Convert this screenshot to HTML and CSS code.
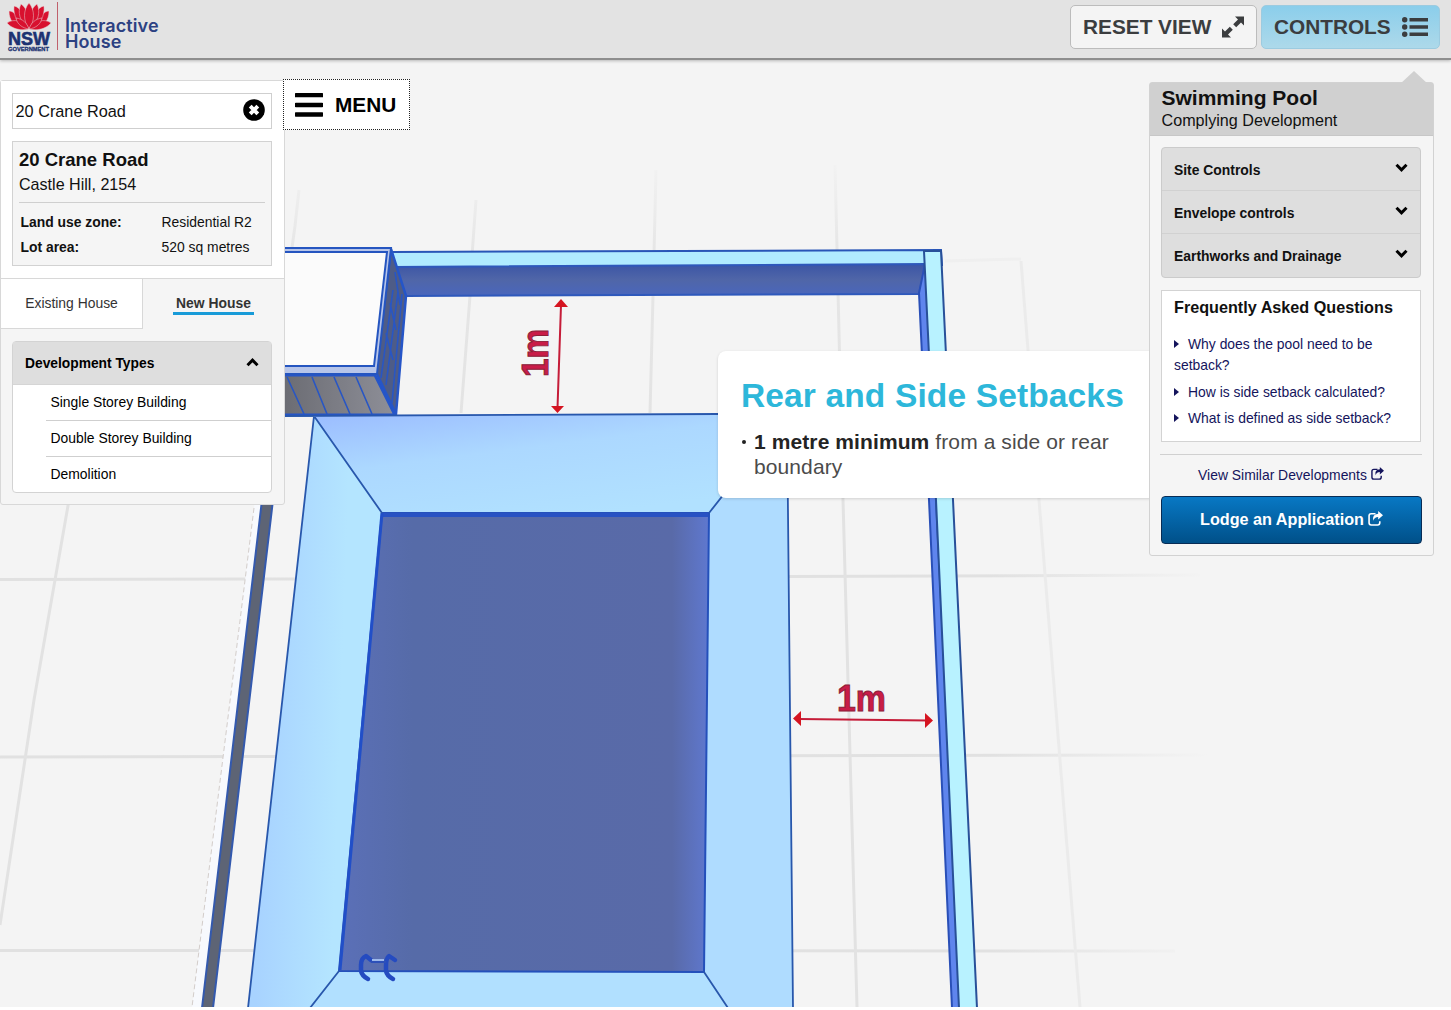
FILE: index.html
```html
<!DOCTYPE html>
<html lang="en">
<head>
<meta charset="utf-8">
<title>Interactive House</title>
<link rel="stylesheet" href="styles.css">
</head>
<body>
<header class="topbar">
  <div class="brand">
    <svg class="waratah" width="48" height="50" viewBox="0 0 48 50">
      <g fill="#d8112f" stroke="#e7d3d5" stroke-width=".5">
        <path d="M4 9C9 9 14 15 18 26C9 25 4 18 4 9Z"/><path d="M44 9C39 9 34 15 30 26C39 25 44 18 44 9Z"/>
        <path d="M9 4C15 5 21 14 22 26C13 23 8 14 9 4Z"/><path d="M39 4C33 5 27 14 26 26C35 23 40 14 39 4Z"/>
        <path d="M16 2C22 6 25 16 23 26C15 20 12 10 16 2Z"/><path d="M32 2C26 6 23 16 25 26C33 20 36 10 32 2Z"/>
        <path d="M24 1C30 8 30 19 24 27C18 19 18 8 24 1Z"/>
        <path d="M2 21C9 16 18 19 24 27C16 29 7 27 2 21Z"/><path d="M46 21C39 16 30 19 24 27C32 29 41 27 46 21Z"/>
        <path d="M11 16C18 17 22 21 24 27C17 26 12 22 11 16Z"/><path d="M37 16C30 17 26 21 24 27C31 26 36 22 37 16Z"/>
      </g>
      <text class="nsw" x="3" y="42.500" textLength="42" lengthAdjust="spacingAndGlyphs">NSW</text>
      <text class="gov" x="3" y="49" textLength="41" lengthAdjust="spacingAndGlyphs">GOVERNMENT</text>
    </svg>
    <div class="brand-name">Interactive<br>House</div>
  </div>
  <div class="actions">
    <button class="btn">RESET VIEW
      <svg width="24" height="24" viewBox="0 0 24 24"><path fill="#3b3d3f" d="M14 1.500h9v9l-3-3-4.800 4.800-3-3L17 4.500zM10 22.500H1v-9l3 3 4.800-4.800 3 3L7 19.500z"/></svg>
    </button>
    <button class="btn btn-on">CONTROLS
      <svg width="26" height="20" viewBox="0 0 26 20" fill="#3b3d3f"><circle cx="2.700" cy="2.700" r="2.700"/><circle cx="2.700" cy="10" r="2.700"/><circle cx="2.700" cy="17.300" r="2.700"/><path d="M7.500 1H26v3.500H7.500zM7.500 8.300H26v3.500H7.500zM7.500 15.500H26V19H7.500z"/></svg>
    </button>
  </div>
</header>
<main class="stage">
  <svg class="scene" viewBox="0 60 1451 947" width="1451" height="947">
    <defs>
      <linearGradient id="deckTop" x1="0" y1="0" x2=".6" y2="1"><stop offset="0" stop-color="#9bbcff"/><stop offset=".45" stop-color="#acd8ff"/><stop offset="1" stop-color="#b1e1ff"/></linearGradient>
      <linearGradient id="deckLeft" x1="0" x2="1" y1="0" y2=".15"><stop offset=".2" stop-color="#a8d3ff"/><stop offset=".75" stop-color="#b4e5ff"/></linearGradient>
      <linearGradient id="water" x1="0" x2="1"><stop offset="0" stop-color="#5b70b8"/><stop offset=".2" stop-color="#566ba8"/><stop offset=".9" stop-color="#596aa8"/><stop offset="1" stop-color="#5f78cf"/></linearGradient>
      <linearGradient id="wall" x1="0" x2="0" y1="0" y2="1"><stop offset="0" stop-color="#3b55a5"/><stop offset=".5" stop-color="#5066a8"/><stop offset="1" stop-color="#4966bd"/></linearGradient>
      <linearGradient id="gridFade" gradientUnits="userSpaceOnUse" x1="0" x2="1210" y1="0" y2="0"><stop offset=".82" stop-color="#e1e1e1"/><stop offset="1" stop-color="#f4f4f4"/></linearGradient>
      <linearGradient id="gridRise" gradientUnits="userSpaceOnUse" x1="0" x2="0" y1="165" y2="500"><stop offset="0" stop-color="#f2f2f2"/><stop offset=".25" stop-color="#e6e6e6"/><stop offset="1" stop-color="#e2e2e2"/></linearGradient>
      <linearGradient id="shade" x1="0" x2="1"><stop offset="0" stop-color="#6a6b72"/><stop offset="1" stop-color="#8e8f98"/></linearGradient>
    </defs>
    <g fill="none" stroke-width="3">
      <path stroke="url(#gridFade)" d="M0 579.500L290 579L790 576.500L1200 575M0 757L1210 755M0 950.500L1175 951"/>
      <path stroke="url(#gridRise)" d="M299 190L295 226L290 262M476 200L472 256M470 296L461 413M656 170L654 254M653 296L650 413M835 165L837 249L843 500L857 1007M69 500L34 700L0 925"/>
      <path stroke="#efefef" d="M945 261L1021 259"/>
      <path stroke="#ebebeb" d="M1021 261L1028 350L1039 500L1060 760L1080 1007"/>
    </g>
    <path fill="#f7f9fd" d="M255 500L265 500L202 1007L192 1007Z"/>
    <path fill="none" stroke="#d3cdca" stroke-dasharray="5 3" d="M255 500L192 1007"/>
    <path fill="#5d6475" stroke="#3359ae" stroke-width="2" d="M262 500L273 500L213 1008L202 1008Z"/>
    <path fill="#fbfbfb" d="M280 252H388L376 367H280Z"/>
    <path fill="#b0ebff" stroke="#2855b7" stroke-width="2" d="M392 252L941 250L942 265L393 268Z"/>
    <path fill="url(#wall)" stroke="#2e58bb" stroke-width="2" d="M393 267L926 264L919 294L406 296Z"/>
    <path fill="#5f85ed" stroke="#294fb7" stroke-width="2" d="M919 293L925 264L928 300L936 500L961 1008H952L929 500Z"/>
    <path fill="#b8f2ff" stroke="#285099" stroke-width="2" d="M924 251H941L953 500L977 1008H959L936 500Z"/>
    <path fill="url(#shade)" stroke="#2555c8" stroke-width="3" d="M280 375H375L395 415H280Z"/>
    <path fill="#4e5c87" stroke="#2555c8" stroke-width="2.500" d="M391 249L406 296L396 414L376 372Z"/>
    <path fill="none" stroke="#2856c4" stroke-width="1.600" d="M287 377L304 414M312 377L327 414M334 377L350 414M356 377L372 414M393 290L381 378M398 292L386 385M402 294L392 403M395 272L400 305M390 303L396 330M386 333L393 360"/>
    <path fill="#b7c5e9" stroke="#2555c0" stroke-width="2" d="M280 366H374L387 252H280V248H391L377 374H280Z"/>
    <path fill="url(#deckTop)" d="M314 416L718 414H788L709 513H382Z"/>
    <path fill="url(#deckLeft)" d="M314 416L382 513L339 971L310 1008H248Z"/>
    <path fill="#afdcff" d="M787 414L709 513L704 971L728 1008H793Z"/>
    <path fill="#b1e0ff" d="M339 971H704L728 1008H310Z"/>
    <path fill="url(#water)" stroke="#2450bb" stroke-width="2" d="M382 513H709L704 972L339 971Z"/>
    <path fill="none" stroke="#2852c3" stroke-width="4" d="M382 515H708"/>
    <path fill="none" stroke="#214fc8" stroke-width="3" d="M382 513L340 970"/>
    <path fill="none" stroke="#2857ac" stroke-width="1.800" d="M280 416L718 414M314 416L382 513M314 416L248 1008M709 513L787 414L793 1008M339 971L310 1008M704 972L728 1008"/>
    <path fill="none" stroke="#254bc0" stroke-width="4.500" stroke-linecap="round" stroke-linejoin="round" d="M371 960L366 956Q361 958 361 965V971Q362 976 368 979M395 960L389 956Q386 958 386 966V971Q387 976 393 979"/>
    <path stroke="#2d50b8" stroke-width="2" d="M371 962H386"/><path stroke="#9db8ea" stroke-width="2" d="M372 960H384"/>
    <g stroke="#c51c38" stroke-width="2" fill="#d51420">
      <path d="M561 305L557.500 408M799 719L928 720.500"/>
      <path stroke="none" d="M561 299L568 307H554ZM557.500 413L564 406H551ZM793 718.500L801 711V726ZM933 720.500L925 713V728Z"/>
    </g>
    <text class="measure" x="837" y="711" textLength="49" lengthAdjust="spacingAndGlyphs">1m</text>
    <text class="measure" transform="translate(548 377) rotate(-90)" textLength="48" lengthAdjust="spacingAndGlyphs">1m</text>
  </svg>

  <section class="callout">
    <h2>Rear and Side Setbacks</h2>
    <ul><li><b>1 metre minimum</b> from a side or rear boundary</li></ul>
  </section>

  <aside class="site">
    <div class="site-top">
      <div class="search"><span>20 Crane Road</span>
        <svg width="22" height="22" viewBox="0 0 22 22"><circle cx="11" cy="11" r="10.800"/><path d="M7.200 7.200l7.600 7.600M14.800 7.200l-7.600 7.600" stroke="#fff" stroke-width="4"/></svg>
      </div>
      <div class="lot">
        <h3>20 Crane Road</h3>
        <p>Castle Hill, 2154</p>
        <dl><dt>Land use zone:</dt><dd>Residential R2</dd><dt>Lot area:</dt><dd>520 sq metres</dd></dl>
      </div>
    </div>
    <nav class="tabs"><a class="tab">Existing House</a><a class="tab tab-on"><span>New House</span></a></nav>
    <div class="types">
      <div class="types-head">Development Types
        <svg width="13" height="9" viewBox="0 0 13 9"><path class="chev" d="M1.500 7.200L6.500 2.200L11.500 7.200"/></svg></div>
      <ul><li>Single Storey Building</li><li>Double Storey Building</li><li>Demolition</li></ul>
    </div>
  </aside>

  <button class="menu">
    <svg width="28" height="24" viewBox="0 0 28 24"><path d="M1 2.200H27M1 12H27M1 21.500H27" stroke="#000" stroke-width="4.300" stroke-linecap="round"/></svg>MENU
  </button>

  <aside class="controls">
    <svg class="pointer" width="28" height="13" viewBox="0 0 28 13"><path fill="#d0d0d0" d="M0 13L14 0L28 13Z"/></svg>
    <div class="controls-head"><h2>Swimming Pool</h2><p>Complying Development</p></div>
    <div class="controls-body">
      <ul class="accordion">
        <li>Site Controls<svg width="13" height="9" viewBox="0 0 13 9"><path class="chev" d="M1.500 1.800L6.500 6.800L11.500 1.800"/></svg></li>
        <li>Envelope controls<svg width="13" height="9" viewBox="0 0 13 9"><path class="chev" d="M1.500 1.800L6.500 6.800L11.500 1.800"/></svg></li>
        <li>Earthworks and Drainage<svg width="13" height="9" viewBox="0 0 13 9"><path class="chev" d="M1.500 1.800L6.500 6.800L11.500 1.800"/></svg></li>
      </ul>
      <div class="faq">
        <h3>Frequently Asked Questions</h3>
        <ul>
          <li><i></i>Why does the pool need to be setback?</li>
          <li><i></i>How is side setback calculated?</li>
          <li><i></i>What is defined as side setback?</li>
        </ul>
      </div>
      <a class="similar">View Similar Developments
        <svg width="13" height="13" viewBox="0 0 14 14"><path class="share" d="M7 2.500H3Q1 2.500 1 4.500V11Q1 13 3 13H9Q11 13 11 11V9.500"/><path fill="currentColor" d="M9.500 0L14 4L9.500 8V5.500Q6 5.500 5 9Q3.500 3 9.500 2.500Z"/></svg></a>
      <button class="lodge">Lodge an Application
        <svg width="15" height="15" viewBox="0 0 14 14"><path class="share" d="M7 2.500H3Q1 2.500 1 4.500V11Q1 13 3 13H9Q11 13 11 11V9.500"/><path fill="currentColor" d="M9.500 0L14 4L9.500 8V5.500Q6 5.500 5 9Q3.500 3 9.500 2.500Z"/></svg></button>
    </div>
  </aside>
</main>
</body>
</html>
```
FILE: styles.css
```css
* { box-sizing: border-box; margin: 0; padding: 0; }
body { width: 1451px; height: 1010px; overflow: hidden; background: #fff; color: #111; font: 13.9px/20px "Liberation Sans", Arial, sans-serif; }
ul { list-style: none; }
button { font-family: inherit; white-space: nowrap; }
svg { flex: none; }

.topbar { position: relative; z-index: 2; height: 60px; display: flex; justify-content: space-between; background: #e3e3e3; border-bottom: 2px solid #8e8e8e; box-shadow: 0 1px 3px rgba(0,0,0,.25); }
.brand { display: flex; padding: 2px 0 0 5px; }
.nsw { font: bold 19px "Liberation Sans", sans-serif; fill: #1c3272; stroke: #1c3272; stroke-width: .6px; }
.gov { font: bold 6px "Liberation Sans", sans-serif; fill: #1c3272; stroke: #1c3272; stroke-width: .3px; }
.brand-name { height: 48px; margin-left: 4px; padding: 16px 0 0 7px; border-left: 1px solid #c0606c; color: #2c4182; font: 600 18px/16px Inter, "Open Sans", sans-serif; letter-spacing: .1px; }
.actions { display: flex; gap: 4px; padding: 5px 11px 0 0; }
.btn { display: flex; align-items: center; justify-content: space-between; width: 187px; height: 44px; padding: 0 11px 1px 12px; border: 1px solid #bcbcbc; border-radius: 5px; background: #f4f4f4; color: #3b3d3f; font-size: 20.8px; font-weight: bold; }
.btn-on { width: 179px; border-color: #9ccbe0; background: linear-gradient(#8bceeb, #add9ea); }

.stage { position: relative; height: 947px; display: flex; align-items: flex-start; background: #f4f4f4; }
.scene { position: absolute; left: 0; top: 0; }
.measure { font: bold 37px "Liberation Sans", sans-serif; fill: #c91c48; stroke: #8c2038; stroke-width: 1px; }
.callout { position: absolute; left: 718px; top: 291px; width: 440px; height: 147px; padding: 25px 0 0 23px; border-radius: 8px; background: #fff; box-shadow: 0 1px 3px rgba(0,0,0,.15); color: #4b4b4b; }
.callout h2 { color: #2db7da; font-size: 33.5px; line-height: 40px; letter-spacing: .14px; white-space: nowrap; }
.callout ul { width: 390px; margin-top: 13px; }
.callout li { position: relative; padding-left: 13px; font-size: 21px; line-height: 25px; letter-spacing: .1px; }
.callout li::before { content: ""; position: absolute; left: 1px; top: 11px; width: 4px; height: 4px; border-radius: 50%; background: #222; }
.callout b { color: #242424; }

.site { position: relative; width: 285px; height: 425px; margin-top: 20px; border: 1px solid #d8d8d8; border-radius: 3px; background: #f5f5f5; }
.site-top { height: 198px; padding: 12px 12px 0 11px; background: #fff; border-bottom: 1px solid #d8d8d8; }
.search { display: flex; align-items: center; justify-content: space-between; height: 36px; padding: 0 6px 0 2.5px; border: 1px solid #cfcfcf; font-size: 16.3px; }
.search svg { margin-top: -3px; }
.lot { height: 125px; margin-top: 12px; padding: 7px 6px 0; border: 1px solid #d2d2d2; background: #f5f5f5; }
.lot h3 { font-size: 18.5px; line-height: 21px; }
.lot p { height: 33px; padding-top: 4px; border-bottom: 1px solid #cfcfcf; font-size: 16.1px; }
.lot dl { display: grid; grid-template-columns: 141px auto; gap: 5px 0; padding: 9px 0 0 1.5px; font-size: 13.9px; }
.lot dt { font-weight: bold; }
.tabs { display: flex; height: 50px; }
.tab { width: 142px; padding-top: 14px; text-align: center; background: #fff; border: solid #d8d8d8; border-width: 0 1px 1px 0; color: #333; }
.tab-on { width: 141px; border: 0; background: none; font-weight: bold; }
.tab-on span { display: inline-block; padding: 0 3px; border-bottom: 3px solid #189bd8; height: 22px; }
.types { width: 260px; height: 152px; margin: 12px 0 0 11px; border: 1px solid #d3d3d3; border-radius: 4px; background: #fff; color: #000; }
.types-head { display: flex; align-items: center; justify-content: space-between; height: 43px; padding: 1px 12px 0; border-bottom: 1px solid #d5d5d5; background: #dedede; font-size: 13.8px; font-weight: bold; }
.types-head svg { margin-top: -3px; }
.types ul { padding-left: 33px; }
.types li { height: 36px; padding: 7px 0 0 4.5px; border-bottom: 1px solid #cfcfcf; }
.types li:last-child { border: 0; }
.chev { fill: none; stroke: #000; stroke-width: 3; }

.menu { position: relative; display: flex; align-items: center; gap: 12px; width: 127px; height: 51px; margin: 19px 0 0 -2px; padding-left: 11px; border: 1px dotted #222; background: #fff; color: #000; font-size: 20.8px; font-weight: bold; }

.controls { position: relative; width: 285px; height: 474px; margin: 22px 17px 0 auto; border: 1px solid #d2d2d2; border-radius: 3px; background: #f5f5f5; }
.pointer { position: absolute; right: 5px; top: -12px; }
.controls-head { height: 53px; padding: 2px 11.5px 0; background: #d0d0d0; border-bottom: 1px solid #c7c7c7; }
.controls-head h2 { font-size: 21px; line-height: 25px; }
.controls-head p { font-size: 16.15px; line-height: 20px; }
.controls-body { padding: 11px 11px 0; }
.accordion { border: 1px solid #cbcbcb; border-radius: 4px; width: 260px; height: 131px; background: #dedede; font-weight: bold; font-size: 13.9px; }
.accordion li { display: flex; align-items: center; justify-content: space-between; height: 43px; padding: 1px 12px 0; border-bottom: 1px solid #d1d1d1; }
.accordion li:last-child { border: 0; }
.accordion svg { margin-top: -5px; }
.faq { width: 260px; height: 152px; margin-top: 12px; padding: 7px 12px 0; border: 1px solid #d3d3d3; background: #fff; }
.faq h3 { font-size: 16.2px; line-height: 19px; margin-bottom: 17px; }
.faq li { color: #14145c; line-height: 21px; margin-bottom: 5.500px; }
.faq i { display: inline-block; margin: 0 9px 1px 0; border: solid transparent; border-width: 4px 0 4px 5px; border-left-color: #14145c; }
.similar { display: flex; align-items: center; justify-content: center; gap: 4px; height: 42px; width: 262px; padding-bottom: 2px; margin: 12px 0 0 -1px; border-top: 1px solid #d0d0d0; color: #14145c; }
.similar svg, .lodge svg { margin-top: -2px; }
.lodge { display: flex; align-items: center; justify-content: center; gap: 4px; width: 261px; height: 48px; padding-bottom: 2px; border: 1px solid #082c55; border-radius: 4px; background: linear-gradient(#0878c4, #005089); color: #fff; font-size: 16.2px; font-weight: bold; }
.share { fill: none; stroke: currentColor; stroke-width: 1.500; }
```
